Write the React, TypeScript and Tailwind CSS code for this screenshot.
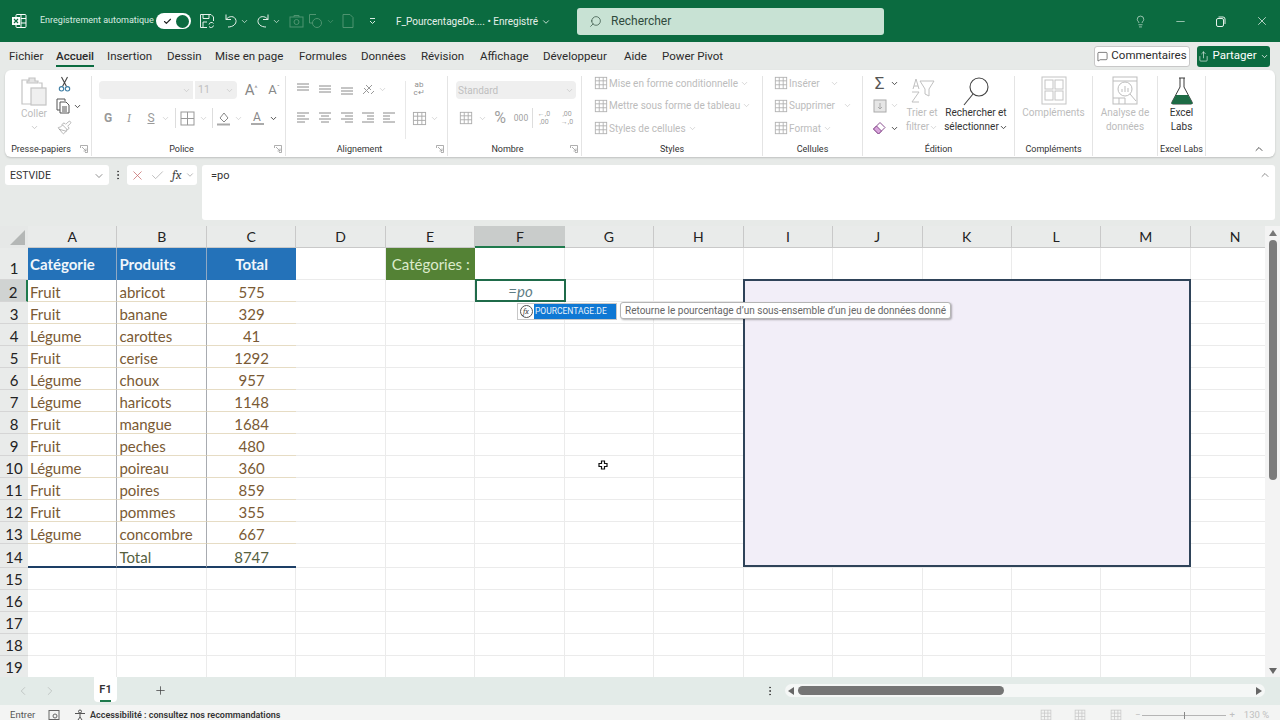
import { ChevronDown, ChevronUp, ChevronLeft, ChevronRight, Search, Lightbulb, Minus, X, Check, Plus, MessageSquare, Share, Paintbrush, MoreVertical } from "lucide-react";
import type { ReactNode } from "react";

const ui = "font-['Roboto',sans-serif]";
const cellFont = "font-['Lato',sans-serif]";

const tabs = [
  { label: "Fichier", w: "w-[47px]" },
  { label: "Accueil", w: "w-[51px]", active: true },
  { label: "Insertion", w: "w-[60px]" },
  { label: "Dessin", w: "w-[48px]" },
  { label: "Mise en page", w: "w-[84px]" },
  { label: "Formules", w: "w-[62px]" },
  { label: "Données", w: "w-[60px]" },
  { label: "Révision", w: "w-[59px]" },
  { label: "Affichage", w: "w-[63px]" },
  { label: "Développeur", w: "w-[81px]" },
  { label: "Aide", w: "w-[38px]" },
  { label: "Power Pivot", w: "w-[80px]" },
];

const rows = [
  ["Fruit", "abricot", "575"],
  ["Fruit", "banane", "329"],
  ["Légume", "carottes", "41"],
  ["Fruit", "cerise", "1292"],
  ["Légume", "choux", "957"],
  ["Légume", "haricots", "1148"],
  ["Fruit", "mangue", "1684"],
  ["Fruit", "peches", "480"],
  ["Légume", "poireau", "360"],
  ["Fruit", "poires", "859"],
  ["Fruit", "pommes", "355"],
  ["Légume", "concombre", "667"],
];

const cols = ["A", "B", "C", "D", "E", "F", "G", "H", "I", "J", "K", "L", "M", "N"];

function Chev({ dark }: { dark?: boolean }) {
  return <ChevronDown size={9} strokeWidth={dark ? 2.5 : 1.5} className={dark ? "text-[#444]" : "text-[#bbb]"} />;
}

// horizontal lines icon, used by the alignment buttons
function Lines({ l, y }: { l: number[][]; y: number[] }) {
  return (
    <svg width="16" height="14" viewBox="0 0 16 14" className="text-[#8a8a8a]">
      {l.map((p, i) => (
        <line key={i} x1={p[0]} x2={p[1]} y1={y[i]} y2={y[i]} stroke="currentColor" strokeWidth="1" />
      ))}
    </svg>
  );
}

function GridIcon({ size = 16, cls = "text-[#b0b0b0]" }: { size?: number; cls?: string }) {
  return (
    <svg width={size} height={size} viewBox="0 0 16 16" className={cls} fill="none" stroke="currentColor">
      <rect x="1.5" y="1.5" width="13" height="13" />
      <path d="M1.5 5.5h13M1.5 10h13M6 1.5v13M10.5 1.5v13" />
    </svg>
  );
}

function Launcher() {
  return (
    <svg width="8" height="8" viewBox="0 0 8 8" fill="none" stroke="#9a9a9a" strokeWidth="0.8">
      <path d="M0.5 3V0.5H7.5V7.5H5M2 2l4 4M6 3.5V6H3.5" />
    </svg>
  );
}

function Group({ label, launcher, w, children }: { label?: string; launcher?: boolean; w: string; children: ReactNode }) {
  return (
    <div className={`flex h-[80px] shrink-0 flex-col border-r border-[#e4e4e4] ${w}`}>
      <div className="h-[66px] overflow-visible">{children}</div>
      <div className="flex h-[14px] items-center">
        <div className="flex-1 text-center text-[9px] leading-none text-[#333] whitespace-nowrap">{label}</div>
        {launcher && (
          <div className="flex w-[14px] justify-end pr-[3px]">
            <Launcher />
          </div>
        )}
      </div>
    </div>
  );
}

function StyleRow({ text, chevCls, icon }: { text: string; chevCls?: string; icon: ReactNode }) {
  return (
    <div className="flex h-[16px] items-center">
      <div className="flex w-[17px] shrink-0 justify-center">{icon}</div>
      <span className="whitespace-nowrap text-[10px] text-[#bcbcbc]">{text}</span>
      <span className={chevCls}>
        <Chev />
      </span>
    </div>
  );
}

function Ribbon() {
  return (
    <div className={`mx-[5px] flex h-[87px] shrink-0 rounded-md bg-white pt-[6px] shadow-[0_1px_2px_rgba(0,0,0,0.18)] ${ui}`}>
      <Group label="Presse-papiers" launcher w="w-[87px]">
        <div className="flex">
          <div className="ml-[13px] flex w-[32px] flex-col items-center">
            <svg width="28" height="30" viewBox="0 0 28 30" fill="none" stroke="#c4c4c4" strokeWidth="1.2">
              <path d="M9 4H2v24h9" />
              <path d="M9 5V2h6v3h3v2H7V5z" fill="#e4e4e4" />
              <path d="M19 7h3v5" />
              <rect x="11" y="12" width="15" height="17" fill="#efefef" />
            </svg>
            <span className="mt-[1px] text-[10px] leading-[14px] text-[#bcbcbc]">Coller</span>
            <ChevronDown size={9} className="mt-[2px] text-[#bbb]" />
          </div>
          <div className="ml-[6px] flex flex-col items-start">
            <svg width="15" height="16" viewBox="0 0 15 16" fill="none" strokeWidth="1.1" className="ml-[1px]">
              <path d="M5.5 10.5L10.5 1M9.5 10.5L4.5 1" stroke="#444" />
              <circle cx="4.5" cy="12.8" r="2.2" stroke="#3f7fa5" />
              <circle cx="10.5" cy="12.8" r="2.2" stroke="#3f7fa5" />
            </svg>
            <div className="mt-[6px] flex items-center">
              <svg width="15" height="16" viewBox="0 0 15 16" fill="none" stroke="#555" strokeWidth="1">
                <path d="M9 3V1H1v11h3" />
                <path d="M4 4h6l3 3v8H4z" />
                <path d="M6 9h5M6 11h5M6 13h5" />
              </svg>
              <span className="ml-[2px]">
                <Chev dark />
              </span>
            </div>
            <Paintbrush size={15} strokeWidth={1.1} className="ml-[1px] mt-[6px] text-[#999]" />
          </div>
        </div>
      </Group>

      <Group label="Police" launcher w="w-[194px]">
        <div className="pl-[7px] pt-[5px]">
          <div className="flex h-[18px] items-center">
            <div className="flex h-[18px] w-[94px] items-center justify-end rounded-l bg-[#efefef] pr-[2px]">
              <Chev />
            </div>
            <div className="ml-[2px] flex h-[18px] w-[42px] items-center justify-between rounded-r bg-[#efefef] px-[3px] text-[10.5px] text-[#c0c0c0]">
              11
              <Chev />
            </div>
            <span className="ml-[4px] w-[20px] text-center text-[15px] text-[#888]">
              A<sup className="text-[7px]">^</sup>
            </span>
            <span className="ml-[3px] w-[20px] text-center text-[13px] text-[#888]">
              A<sup className="text-[7px]">ˇ</sup>
            </span>
          </div>
          <div className="mt-[9px] flex h-[20px] items-center text-[12px] text-[#999]">
            <span className="w-[18px] text-center font-bold">G</span>
            <span className="ml-[3px] w-[18px] text-center font-serif italic">I</span>
            <span className="ml-[4px] w-[18px] text-center underline">S</span>
            <span className="ml-[1px] w-[8px]">
              <Chev />
            </span>
            <span className="ml-[6px] h-[20px] w-px bg-[#ddd]" />
            <span className="ml-[2px] flex w-[18px] justify-center">
              <svg width="15" height="15" viewBox="0 0 15 15" fill="none" stroke="#999">
                <rect x="1" y="1" width="13" height="13" />
                <path d="M7.5 1v13M1 7.5h13" />
              </svg>
            </span>
            <span className="ml-[3px] w-[8px]">
              <Chev />
            </span>
            <span className="ml-[5px] h-[20px] w-px bg-[#ddd]" />
            <span className="ml-[1px] flex w-[18px] justify-center">
              <svg width="15" height="15" viewBox="0 0 15 15" fill="none" stroke="#888">
                <path d="M4 7l4-5 4 5-4 4z" />
                <rect x="1" y="12.5" width="13" height="2" fill="#aaa" stroke="none" />
              </svg>
            </span>
            <span className="ml-[2px] w-[8px]">
              <Chev />
            </span>
            <span className="ml-[6px] flex w-[18px] flex-col items-center text-[12px] leading-[12px] text-[#888]">
              A
              <span className="h-[2px] w-[13px] bg-[#aaa]" />
            </span>
            <span className="ml-[3px] w-[8px]">
              <Chev dark />
            </span>
          </div>
        </div>
      </Group>

      <Group label="Alignement" launcher w="w-[162px]">
        <div className="flex pl-[6px] pt-[5px]">
          <div className="w-[108px]">
            <div className="flex h-[16px] items-center">
              <span className="flex w-[22px] justify-center"><Lines l={[[2, 14], [2, 14], [2, 14]]} y={[2, 5, 8]} /></span>
              <span className="flex w-[22px] justify-center"><Lines l={[[2, 14], [2, 14], [2, 14]]} y={[4, 7, 10]} /></span>
              <span className="flex w-[22px] justify-center"><Lines l={[[2, 14], [2, 14], [2, 14]]} y={[6, 9, 12]} /></span>
              <span className="flex w-[20px] justify-center">
                <svg width="15" height="15" viewBox="0 0 15 15" fill="none" stroke="#999">
                  <path d="M2 12L11 3M5 3l5 5M3 6l5 5M10 12l3-3" />
                </svg>
              </span>
              <span className="w-[8px]"><Chev /></span>
            </div>
            <div className="mt-[13px] flex h-[16px] items-center">
              <span className="flex w-[22px] justify-center"><Lines l={[[2, 14], [2, 10], [2, 14], [2, 10]]} y={[2, 5, 8, 11]} /></span>
              <span className="flex w-[22px] justify-center"><Lines l={[[2, 14], [4, 12], [2, 14], [4, 12]]} y={[2, 5, 8, 11]} /></span>
              <span className="flex w-[22px] justify-center"><Lines l={[[2, 14], [6, 14], [2, 14], [6, 14]]} y={[2, 5, 8, 11]} /></span>
              <span className="flex w-[20px] justify-center"><Lines l={[[2, 14], [7, 14], [7, 14], [2, 14]]} y={[2, 5, 8, 11]} /></span>
              <span className="flex w-[22px] justify-center"><Lines l={[[2, 14], [2, 9], [2, 9], [2, 14]]} y={[2, 5, 8, 11]} /></span>
            </div>
          </div>
          <span className="ml-[5px] h-[58px] w-px bg-[#e8e8e8]" />
          <div className="ml-[3px] flex flex-col">
            <span className="flex h-[16px] w-[20px] flex-col items-center justify-center text-[8px] leading-[8px] text-[#8f8f8f]">
              <span>ab</span>
              <span>c↵</span>
            </span>
            <div className="mt-[13px] flex h-[16px] items-center">
              <span className="flex w-[20px] justify-center"><GridIcon size={15} cls="text-[#aaa]" /></span>
              <span className="ml-[1px]"><Chev /></span>
            </div>
          </div>
        </div>
      </Group>

      <Group label="Nombre" launcher w="w-[134px]">
        <div className="pl-[8px] pt-[5px]">
          <div className="flex h-[18px] w-[120px] items-center justify-between rounded-sm bg-[#efefef] px-[2px] text-[10px] text-[#c0c0c0]">
            Standard
            <Chev />
          </div>
          <div className="mt-[9px] flex h-[20px] items-center text-[#a0a0a0]">
            <span className="flex w-[20px] justify-center"><GridIcon size={14} cls="text-[#aaa]" /></span>
            <span className="ml-[2px] w-[8px]"><Chev /></span>
            <span className="ml-[5px] w-[18px] text-center text-[16px]">%</span>
            <span className="ml-[1px] w-[22px] text-center text-[8.5px]">000</span>
            <span className="h-[20px] w-px bg-[#ddd]" />
            <span className="ml-[1px] w-[20px] text-center text-[7px] leading-[8px]">←,0<br />,00</span>
            <span className="ml-[3px] w-[20px] text-center text-[7px] leading-[8px]">,00<br />→,0</span>
          </div>
        </div>
      </Group>

      <Group label="Styles" w="w-[181px]">
        <div className="-mt-[1px] flex flex-col gap-[6.5px] pl-[10px]">
          <StyleRow text="Mise en forme conditionnelle" chevCls="ml-[2px]" icon={<GridIcon size={14} />} />
          <StyleRow text="Mettre sous forme de tableau" chevCls="ml-[2px]" icon={<GridIcon size={14} />} />
          <StyleRow text="Styles de cellules" chevCls="ml-[2px]" icon={<GridIcon size={14} />} />
        </div>
      </Group>

      <Group label="Cellules" w="w-[100px]">
        <div className="-mt-[1px] flex flex-col gap-[6.5px] pl-[9px]">
          <StyleRow text="Insérer" chevCls="ml-[10px]" icon={<GridIcon size={14} />} />
          <StyleRow text="Supprimer" chevCls="ml-[8px]" icon={<GridIcon size={14} />} />
          <StyleRow text="Format" chevCls="ml-[2px]" icon={<GridIcon size={14} />} />
        </div>
      </Group>

      <Group label="Édition" w="w-[152px]">
        <div className="flex">
          <div className="-mt-[1px] ml-[9px] flex w-[27px] flex-col gap-[6.5px]">
            <div className="flex h-[16px] items-center">
              <span className="w-[16px] text-center text-[17px] leading-none text-[#555]">Σ</span>
              <span className="ml-[3px]"><Chev dark /></span>
            </div>
            <div className="flex h-[16px] items-center">
              <span className="flex w-[16px] justify-center">
                <svg width="14" height="14" viewBox="0 0 14 14" fill="#e6e6e6" stroke="#aaa">
                  <rect x="1" y="1" width="12" height="12" />
                  <path d="M7 4v6M5 8l2 2 2-2" fill="none" />
                </svg>
              </span>
              <span className="ml-[3px]"><Chev /></span>
            </div>
            <div className="flex h-[16px] items-center">
              <span className="flex w-[16px] justify-center">
                <svg width="15" height="15" viewBox="0 0 15 15" fill="none" stroke="#8a4f8f">
                  <path d="M1.5 8L8 1.5l5 5L6.5 13z" />
                  <path d="M1.5 8l5 5 3-3-5-5z" fill="#d9a6dc" />
                </svg>
              </span>
              <span className="ml-[3px]"><Chev dark /></span>
            </div>
          </div>
          <div className="ml-[3px] flex w-[40px] flex-col items-center">
            <svg width="30" height="30" viewBox="0 0 30 30" fill="none" stroke="#c0c0c0">
              <path d="M6 13l3-10 3 10M7 10h4M5 16h7l-7 10h7" />
              <path d="M13 5h14l-5 8v7l-4-2v-5z" />
            </svg>
            <span className="text-[10px] leading-[14px] text-[#bcbcbc]">Trier et</span>
            <span className="flex items-center text-[10px] leading-[14px] text-[#bcbcbc]">filtrer <Chev /></span>
          </div>
          <div className="flex w-[68px] flex-col items-center">
            <svg width="30" height="30" viewBox="0 0 30 30" fill="none" stroke="#444" strokeWidth="1.1">
              <circle cx="18" cy="11" r="9" />
              <path d="M12 18L3 29" />
            </svg>
            <span className="whitespace-nowrap text-[10px] leading-[14px] text-[#333]">Rechercher et</span>
            <span className="flex items-center whitespace-nowrap text-[10px] leading-[14px] text-[#333]">sélectionner <Chev dark /></span>
          </div>
        </div>
      </Group>

      <Group label="Compléments" w="w-[78px]">
        <div className="flex flex-col items-center">
          <svg width="30" height="30" viewBox="0 0 30 30" fill="none" stroke="#c4c4c4">
            <rect x="3" y="1" width="24" height="27" />
            <rect x="6" y="4" width="8" height="9" />
            <rect x="16" y="4" width="8" height="9" />
            <rect x="6" y="15" width="8" height="9" />
            <rect x="16" y="15" width="8" height="9" />
          </svg>
          <span className="text-[10px] leading-[14px] text-[#bcbcbc]">Compléments</span>
        </div>
      </Group>

      <Group w="w-[65px]">
        <div className="flex flex-col items-center">
          <svg width="30" height="30" viewBox="0 0 30 30" fill="none" stroke="#bdbdbd">
            <rect x="3" y="1" width="24" height="27" />
            <path d="M3 5h24" />
            <circle cx="15" cy="13" r="7" />
            <path d="M12 16v-3M15 16v-6M18 16v-4M20 18l6 7M3 22h12M9 22v6M15 22v6" />
          </svg>
          <span className="text-[10px] leading-[14px] text-[#bcbcbc]">Analyse de</span>
          <span className="text-[10px] leading-[14px] text-[#bcbcbc]">données</span>
        </div>
      </Group>

      <Group label="Excel Labs" w="w-[48px]">
        <div className="flex flex-col items-center">
          <svg width="30" height="30" viewBox="0 0 30 30" fill="none" stroke="#3b3b3b">
            <path d="M12 2h6M13 2v9L5 26q-1 2 1 2h18q2 0 1-2l-8-15V2" />
            <path d="M9 19h12l4.5 8q.5 1-1 1H5.5q-1.5 0-1-1z" fill="#1d6b45" stroke="none" />
          </svg>
          <span className="text-[10px] leading-[14px] text-[#333]">Excel</span>
          <span className="text-[10px] leading-[14px] text-[#333]">Labs</span>
        </div>
      </Group>

      <div className="flex h-[80px] flex-1 items-end justify-end pb-[1px] pr-[10px]">
        <ChevronUp size={12} className="text-[#555]" />
      </div>
    </div>
  );
}

function TitleBar() {
  return (
    <div className={`flex h-[42px] shrink-0 items-center bg-[#0b6b40] text-white ${ui}`}>
      <svg width="16" height="16" viewBox="0 0 16 16" fill="none" stroke="#fff" className="ml-[11px]">
        <rect x="5" y="1.5" width="10" height="13" rx="1" />
        <path d="M10 1.5v13M10 5.5h5M10 10h5" />
        <rect x="1" y="4" width="8" height="8" fill="#fff" stroke="none" />
        <path d="M3 6l4 4M7 6l-4 4" stroke="#0b6b40" strokeWidth="1.2" />
      </svg>
      <span className="ml-[13px] w-[116px] whitespace-nowrap text-[9px] text-[#d9ebe1]">Enregistrement automatique</span>
      <div className="flex h-[16px] w-[35px] items-center justify-between rounded-full bg-white pl-[7px] pr-[2px]">
        <Check size={9} strokeWidth={3} className="text-[#222]" />
        <span className="h-[13px] w-[13px] rounded-full bg-[#0b6b40]" />
      </div>
      <svg width="16" height="16" viewBox="0 0 16 16" fill="none" stroke="#e6f0ea" className="ml-[8px]">
        <path d="M8 14.5H1.5v-13H12l2.5 2.5V8" />
        <path d="M4 1.5v4h6v-4M4 14.5V9h4" />
        <path d="M10 11.5a2.5 2.5 0 0 1 4.5-1M14.5 12.5a2.5 2.5 0 0 1-4.5 1" />
      </svg>
      <svg width="16" height="16" viewBox="0 0 16 16" fill="none" stroke="#e6f0ea" className="ml-[8px]">
        <path d="M3 1.5v5h5M3 6.5C6 2.5 12 2.5 13 7.5 13.5 11 10 14 5 14" />
      </svg>
      <ChevronDown size={9} className="ml-[1px] text-[#d9ebe1]" />
      <svg width="16" height="16" viewBox="0 0 16 16" fill="none" stroke="#e6f0ea" className="ml-[6px]">
        <path d="M13 1.5v5H8M13 6.5C10 2.5 4 2.5 3 7.5 2.5 11 6 14 11 14" />
      </svg>
      <ChevronDown size={9} className="ml-[1px] text-[#d9ebe1]" />
      <svg width="15" height="15" viewBox="0 0 15 15" fill="none" stroke="#4f9470" className="ml-[8px]">
        <rect x="1" y="3" width="13" height="10" />
        <circle cx="7.5" cy="8" r="2.5" />
        <path d="M5 3V1.5h5V3" />
      </svg>
      <svg width="16" height="16" viewBox="0 0 16 16" fill="none" stroke="#4f9470" className="ml-[4px]">
        <path d="M8 1.5H1.5V10H4" />
        <circle cx="9" cy="10" r="4.5" />
      </svg>
      <ChevronDown size={9} className="ml-[2px] text-[#4f9470]" />
      <svg width="14" height="16" viewBox="0 0 14 16" fill="none" stroke="#4f9470" className="ml-[6px]">
        <path d="M2 1.5h7l3 3v10H2z" />
      </svg>
      <svg width="9" height="9" viewBox="0 0 9 9" fill="none" stroke="#d9ebe1" className="ml-[13px]">
        <path d="M2 1.5h5M2 4l2.5 2.5L7 4" />
      </svg>
      <span className="ml-[19px] w-[181px] whitespace-nowrap text-[10px] text-[#e6f0ea]">
        F_PourcentageDe.... • Enregistré <ChevronDown size={10} className="inline" />
      </span>
      <div className="flex h-[27px] w-[307px] items-center rounded-[3px] bg-[#c8e2d4] pl-[12px] text-[12px] text-[#2f4a3c]">
        <Search size={13} strokeWidth={1.3} className="-scale-x-100" />
        <span className="ml-[9px]">Rechercher</span>
      </div>
      <Lightbulb size={13} strokeWidth={1.3} className="ml-[250px] text-[#cfe4d8]" />
      <Minus size={13} strokeWidth={1.3} className="ml-[27px] text-[#cfe4d8]" />
      <svg width="11" height="11" viewBox="0 0 11 11" fill="none" stroke="#e6f0ea" className="ml-[28px]">
        <rect x="1.5" y="2.5" width="7" height="8" rx="1.5" />
        <path d="M3.5 1h4.5a2 2 0 0 1 2 2v5" />
      </svg>
      <X size={14} strokeWidth={1.3} className="ml-[29px] text-[#e6f0ea]" />
    </div>
  );
}

function MenuBar() {
  return (
    <div className={`flex h-[28px] shrink-0 items-center pl-[9px] text-[11.5px] text-[#2b2b2b] ${ui}`}>
      {tabs.map((t) => (
        <div key={t.label} className={`shrink-0 whitespace-nowrap pt-[2px] ${t.w}`}>
          <span className={t.active ? "inline-block border-b-2 border-[#0b6b40] font-medium leading-[17px]" : ""}>{t.label}</span>
        </div>
      ))}
      <div className="ml-[352px] flex h-[21px] w-[96px] items-center justify-center rounded-[3px] border border-[#c8c8c8] bg-white">
        <MessageSquare size={11} strokeWidth={1.3} className="mr-[3px]" />
        Commentaires
      </div>
      <div className="ml-[7px] flex h-[21px] w-[73px] items-center justify-center rounded-[3px] bg-[#0b6b40] text-white">
        <Share size={11} strokeWidth={1.3} className="mr-[3px]" />
        Partager
        <ChevronDown size={9} className="ml-[3px]" />
      </div>
    </div>
  );
}

function FormulaBar() {
  return (
    <div className={`flex h-[69px] shrink-0 items-start pl-[5px] pt-[8px] ${ui}`}>
      <div className="flex h-[20px] w-[104px] items-center justify-between rounded-[3px] bg-white pl-[5px] pr-[4px] pt-[1px] text-[10.5px] text-[#333]">
        ESTVIDE
        <ChevronDown size={12} strokeWidth={1.3} className="text-[#555]" />
      </div>
      <MoreVertical size={12} className="ml-[3px] mt-[4px] text-[#444]" />
      <div className="ml-[3px] flex h-[20px] w-[70px] items-center rounded-[3px] bg-white pl-[3px] text-[#aaa]">
        <X size={15} strokeWidth={1.2} className="text-[#c46a6a]" />
        <Check size={15} strokeWidth={1.2} className="ml-[5px]" />
        <span className="ml-[7px] font-serif text-[13px] italic text-[#444]">fx</span>
        <ChevronDown size={10} className="ml-[3px]" />
      </div>
      <div className="ml-[5px] mr-[5px] flex h-[55px] flex-1 items-start justify-between rounded-[3px] bg-white pl-[9px] pr-[4px] pt-[3px] text-[11px] text-[#333]">
        =po
        <ChevronUp size={12} strokeWidth={1.3} className="mt-[1px] text-[#555]" />
      </div>
    </div>
  );
}

function Sheet() {
  const blank = "border-b border-r border-[#ebebeb]";
  const headCell = "flex items-center text-[15px]";
  return (
    <div className={`relative flex h-[451px] shrink-0 overflow-hidden bg-white ${cellFont}`}>
      <div className="w-[1265px] shrink-0 overflow-hidden">
        <div className="grid grid-cols-[28px_repeat(14,89.46px)] grid-rows-[22px_32px_repeat(12,22px)_24px_repeat(5,22px)]">
          {/* column letters */}
          <div className="flex items-end justify-end bg-[#e6e8e7] p-[3px]">
            <div className="h-0 w-0 border-b-[15px] border-l-[15px] border-b-[#b4b7b6] border-l-transparent" />
          </div>
          {cols.map((c) => (
            <div
              key={c}
              className={
                c === "F"
                  ? "flex items-center justify-center border-b-2 border-[#1f7a4d] bg-[#c9cccb] text-[14px] text-[#222]"
                  : "flex items-center justify-center border-b border-r border-[#c9c9c9] bg-[#e9ebea] text-[14px] text-[#222]"
              }
            >
              {c}
            </div>
          ))}

          {/* row 1 */}
          <div className="flex items-end justify-center border-b border-[#d5d5d5] bg-[#e9ebea] text-[15px] text-[#222]">1</div>
          <div className={`${headCell} border-r border-[#8fa9c4] bg-[#2472b9] pl-[2px] font-bold text-[#f0f6fb]`}>Catégorie</div>
          <div className={`${headCell} border-r border-[#8fa9c4] bg-[#2472b9] pl-[2px] font-bold text-[#f0f6fb]`}>Produits</div>
          <div className={`${headCell} justify-center bg-[#2472b9] font-bold text-[#f0f6fb]`}>Total</div>
          <div className={blank} />
          <div className={`${headCell} bg-[#548235] pl-[6px] text-[#dcebcc]`}>Catégories :</div>
          <div className={blank} />
          {cols.slice(6).map((c) => (
            <div key={c} className={blank} />
          ))}

          {/* rows 2 to 13 */}
          {rows.map((r, i) => (
            <Row key={i} n={i + 2} r={r} />
          ))}

          {/* row 14 */}
          <div className="flex items-center justify-center border-b border-[#d5d5d5] bg-[#e9ebea] pt-[4px] text-[15px] text-[#222]">14</div>
          <div className="border-b-2 border-r border-b-[#1d3f66] border-r-[#a8abb0]" />
          <div className="flex items-center border-b-2 border-r border-b-[#1d3f66] border-r-[#a8abb0] pl-[2px] pt-[4px] text-[15px] text-[#56613f]">Total</div>
          <div className="flex items-center justify-center border-b-2 border-b-[#1d3f66] pt-[4px] text-[15px] text-[#56613f]">8747</div>
          {cols.slice(3).map((c) => (
            <div key={c} className={blank} />
          ))}

          {/* rows 15 to 19 */}
          {[15, 16, 17, 18, 19].map((n) => (
            <Empty key={n} n={n} />
          ))}
        </div>
      </div>

      {/* vertical scrollbar */}
      <div className="flex w-[15px] flex-col items-center bg-[#f3f3f3]">
        <span className="mt-[4px] h-0 w-0 border-x-[4px] border-b-[6px] border-x-transparent border-b-[#777]" />
        <span className="mt-[4px] h-[240px] w-[8px] rounded-full bg-[#7c7c7c]" />
        <span className="mb-[3px] mt-auto h-0 w-0 border-x-[4px] border-t-[6px] border-x-transparent border-t-[#666]" />
      </div>

      {/* shape sitting over the grid */}
      <div className="absolute left-[743px] top-[53px] h-[288px] w-[448px] border-2 border-[#2f4359] bg-[#f2eef8]" />

      {/* active cell */}
      <div className="absolute left-[475px] top-[53px] flex h-[23px] w-[91px] items-center justify-center border-2 border-[#1f6b4a] bg-white pt-[1px] text-[15px] leading-none italic text-[#5f7d85]">
        =po
      </div>

      {/* function autocomplete */}
      <div className={`absolute left-[517px] top-[77px] flex h-[17px] w-[100px] items-center border border-[#c8c8c8] bg-white ${ui}`}>
        <span className="flex h-[15px] w-[16px] shrink-0 items-center justify-center">
          <span className="flex h-[13px] w-[13px] items-center justify-center rounded-full border border-[#555] font-serif text-[8px] italic text-[#444]">fx</span>
        </span>
        <span className="flex h-[15px] flex-1 items-center bg-[#0f78d4] pl-[1px] text-[8.5px] whitespace-nowrap text-[#eaf3fb]">POURCENTAGE.DE</span>
      </div>
      <div className={`absolute left-[620px] top-[76px] flex h-[17px] w-[331px] items-center rounded-[3px] border border-[#b5b5b5] bg-white pl-[4px] text-[10px] whitespace-nowrap text-[#666] shadow-[1px_1px_2px_rgba(0,0,0,0.3)] ${ui}`}>
        Retourne le pourcentage d’un sous-ensemble d’un jeu de données donné
      </div>

      {/* pointer */}
      <svg width="10" height="10" viewBox="0 0 10 10" fill="#fff" stroke="#111" strokeWidth="1.2" className="absolute left-[598px] top-[234px]">
        <path d="M3.5 1h3v2.5H9v3H6.5V9h-3V6.5H1v-3h2.5z" />
      </svg>
    </div>
  );
}

function Row({ n, r }: { n: number; r: string[] }) {
  const base = "flex items-center border-b border-[#e6dcc4] pt-[4px] text-[15px] text-[#7a5a34]";
  return (
    <>
      <div
        className={
          n === 2
            ? "flex items-center justify-center border-b border-r-2 border-b-[#d5d5d5] border-r-[#1f7a4d] bg-[#d0d3d2] pt-[4px] text-[15px] text-[#222]"
            : "flex items-center justify-center border-b border-[#d5d5d5] bg-[#e9ebea] pt-[4px] text-[15px] text-[#222]"
        }
      >
        {n}
      </div>
      <div className={`${base} border-r-[1px] border-r-[#a8abb0] pl-[2px]`}>{r[0]}</div>
      <div className={`${base} border-r-[1px] border-r-[#a8abb0] pl-[2px]`}>{r[1]}</div>
      <div className={`${base} justify-center`}>{r[2]}</div>
      {cols.slice(3).map((c) => (
        <div key={c} className="border-b border-r border-[#ebebeb]" />
      ))}
    </>
  );
}

function Empty({ n }: { n: number }) {
  return (
    <>
      <div className="flex items-center justify-center border-b border-[#d5d5d5] bg-[#e9ebea] pt-[2px] text-[15px] text-[#222]">{n}</div>
      {cols.map((c) => (
        <div key={c} className="border-b border-r border-[#ebebeb]" />
      ))}
    </>
  );
}

function SheetTabs() {
  return (
    <div className={`flex h-[28px] shrink-0 items-start bg-[#e3ebe8] ${ui}`}>
      <ChevronLeft size={14} strokeWidth={1.2} className="ml-[16px] mt-[7px] text-[#b3b8b6]" />
      <ChevronRight size={14} strokeWidth={1.2} className="ml-[13px] mt-[7px] text-[#b3b8b6]" />
      <div className="ml-[37px] flex h-[25px] w-[23px] flex-col items-center rounded-b bg-white pt-[5px] text-[11px] font-semibold text-[#333]">
        F1
        <span className="mt-[1px] h-[2px] w-[11px] bg-[#1f7a4d]" />
      </div>
      <Plus size={13} strokeWidth={1.4} className="ml-[37px] mt-[7px] text-[#444]" />
      <MoreVertical size={12} strokeWidth={2} className="ml-[597px] mt-[8px] text-[#444]" />
      <div className="ml-[9px] mt-[7px] flex h-[13px] w-[480px] items-center rounded-full bg-[#f5f7f6] pl-[3px] pr-[3px]">
        <span className="h-0 w-0 border-y-[4px] border-r-[6px] border-y-transparent border-r-[#666]" />
        <span className="ml-[4px] h-[9px] w-[206px] rounded-full bg-[#757575]" />
        <span className="ml-auto h-0 w-0 border-y-[4px] border-l-[6px] border-y-transparent border-l-[#666]" />
      </div>
    </div>
  );
}

function StatusBar() {
  return (
    <div className={`flex-1 overflow-hidden bg-[#f3f4f3] pl-[10px] pt-[4px] text-[9.5px] leading-none text-[#555] ${ui}`}>
      <div className="flex h-[12px] items-center">
        <span className="w-[38px]">Entrer</span>
        <svg width="12" height="12" viewBox="0 0 12 12" fill="none" stroke="#666">
          <rect x="1" y="1.5" width="10" height="9" />
          <circle cx="7" cy="7" r="2" />
        </svg>
        <svg width="12" height="12" viewBox="0 0 12 12" fill="none" stroke="#555" className="ml-[14px]">
          <circle cx="6" cy="2.5" r="1.5" />
          <path d="M1 4.5h10M6 4.5V8M4 11l2-3 2 3" />
        </svg>
        <span className="ml-[4px] w-[950px] whitespace-nowrap text-[9px] font-semibold text-[#333]">Accessibilité : consultez nos recommandations</span>
        <GridIcon size={12} cls="text-[#c8c8c8]" />
        <GridIcon size={12} cls="ml-[22px] text-[#c8c8c8]" />
        <GridIcon size={12} cls="ml-[24px] text-[#c8c8c8]" />
        <span className="ml-[13px] text-[#c0c0c0]">−</span>
        <span className="relative ml-[2px] flex h-[1px] w-[84px] bg-[#b5b5b5]">
          <span className="absolute left-[42px] top-[-3px] h-[7px] w-[1px] bg-[#888]" />
        </span>
        <span className="ml-[3px] text-[#c0c0c0]">+</span>
        <span className="ml-[9px] whitespace-nowrap text-[#c0c0c0]">130 %</span>
      </div>
    </div>
  );
}

export default function App() {
  return (
    <div className="flex h-[720px] w-[1280px] flex-col overflow-hidden bg-[#e7eae8]">
      <TitleBar />
      <MenuBar />
      <Ribbon />
      <FormulaBar />
      <Sheet />
      <SheetTabs />
      <StatusBar />
    </div>
  );
}
